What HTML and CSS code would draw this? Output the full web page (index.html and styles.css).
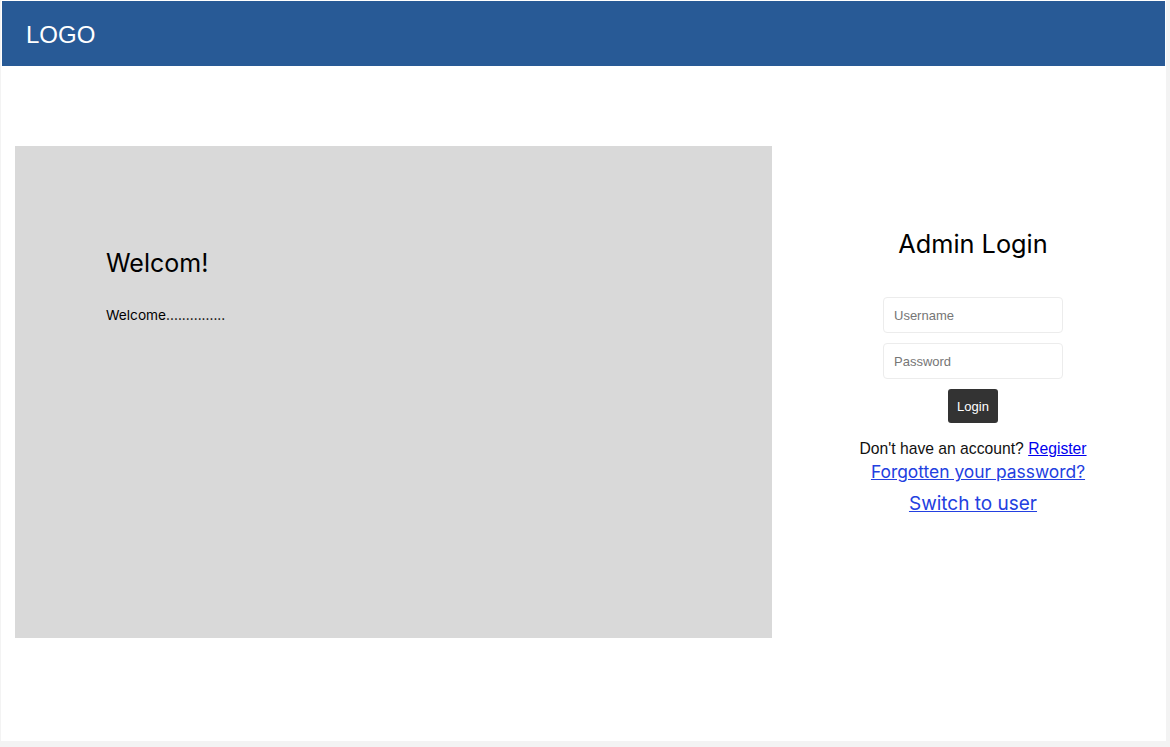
FILE: index.html
```html
<!DOCTYPE html>
<html lang="en">
<head>
<meta charset="utf-8">
<title>Admin Login</title>
<link rel="stylesheet" href="styles.css">
</head>
<body>
<div class="page">
  <header class="topbar">
    <div class="logo">LOGO</div>
  </header>
  <main class="content">
    <section class="welcome">
      <h1 class="welcome-title">Welcom!</h1>
      <p class="welcome-text">Welcome...............</p>
    </section>
    <section class="login">
      <h2 class="login-title">Admin Login</h2>
      <form class="login-form">
        <input class="field" type="text" placeholder="Username">
        <input class="field" type="password" placeholder="Password">
        <button class="btn" type="button">Login</button>
      </form>
      <p class="register">Don't have an account? <a href="#" class="reg-link">Register</a></p>
      <a href="#" class="link forgot">Forgotten your password?</a>
      <a href="#" class="link switch">Switch to user</a>
    </section>
  </main>
</div>
</body>
</html>
```
FILE: styles.css
```css
html, body {
  margin: 0;
  padding: 0;
}
body {
  background: #f3f3f3;
  width: 1170px;
  height: 747px;
  overflow: hidden;
}
.page {
  margin-left: 1px;
  width: 1165px;
  height: 741px;
  background: #ffffff;
  padding-top: 1px;
  box-sizing: border-box;
}
.topbar {
  margin: 0 1px 0 1px;
  height: 65px;
  background: #285a96;
  display: flex;
  align-items: center;
  padding: 2px 0 0 24px;
  box-sizing: border-box;
}
.logo {
  color: #ffffff;
  font-family: "Liberation Sans", Arial, sans-serif;
  font-size: 24px;
  line-height: 28px;
}
.content {
  display: flex;
  margin-top: 80px;
  padding-left: 14px;
}
.welcome {
  width: 757px;
  height: 492px;
  background: #d9d9d9;
  padding: 102px 0 0 91px;
  box-sizing: border-box;
  font-family: Inter, "Noto Sans", sans-serif;
  color: #000;
}
.welcome-title {
  margin: 0;
  font-size: 25px;
  font-weight: 400;
  line-height: 30px;
}
.welcome-text {
  margin: 27px 0 0;
  font-size: 13.7px;
  line-height: 20px;
}
.login {
  flex: 1;
  display: flex;
  flex-direction: column;
  align-items: center;
  padding: 82px 0 0 8px;
  font-family: Inter, "Noto Sans", sans-serif;
}
.login-title {
  margin: 0;
  font-size: 25.3px;
  font-weight: 400;
  line-height: 32px;
  color: #000;
}
.login-form {
  margin-top: 37px;
  display: flex;
  flex-direction: column;
  align-items: center;
  gap: 10px;
}
.field {
  width: 180px;
  height: 36px;
  box-sizing: border-box;
  border: 1px solid #ececec;
  border-radius: 4px;
  padding: 0 10px;
  font-family: "Liberation Sans", Arial, sans-serif;
  font-size: 13px;
  color: #333;
  background: #fff;
  outline: none;
}
.field::placeholder {
  color: #767676;
}
.btn {
  width: 50px;
  height: 34px;
  border: none;
  border-radius: 3px;
  background: #333333;
  color: #ffffff;
  font-family: "Liberation Sans", Arial, sans-serif;
  font-size: 13px;
  padding: 0;
}
.register {
  margin: 16px 0 0;
  font-family: "Liberation Sans", Arial, sans-serif;
  font-size: 15.7px;
  line-height: 20px;
  color: #111;
}
.reg-link {
  color: #0000ee;
}
.link {
  color: #2340e0;
  text-decoration: underline;
  display: block;
}
.forgot {
  margin-top: 2px;
  font-size: 17.4px;
  line-height: 22px;
  padding-left: 10px;
}
.switch {
  margin-top: 8px;
  font-size: 19px;
  line-height: 26px;
}
```
